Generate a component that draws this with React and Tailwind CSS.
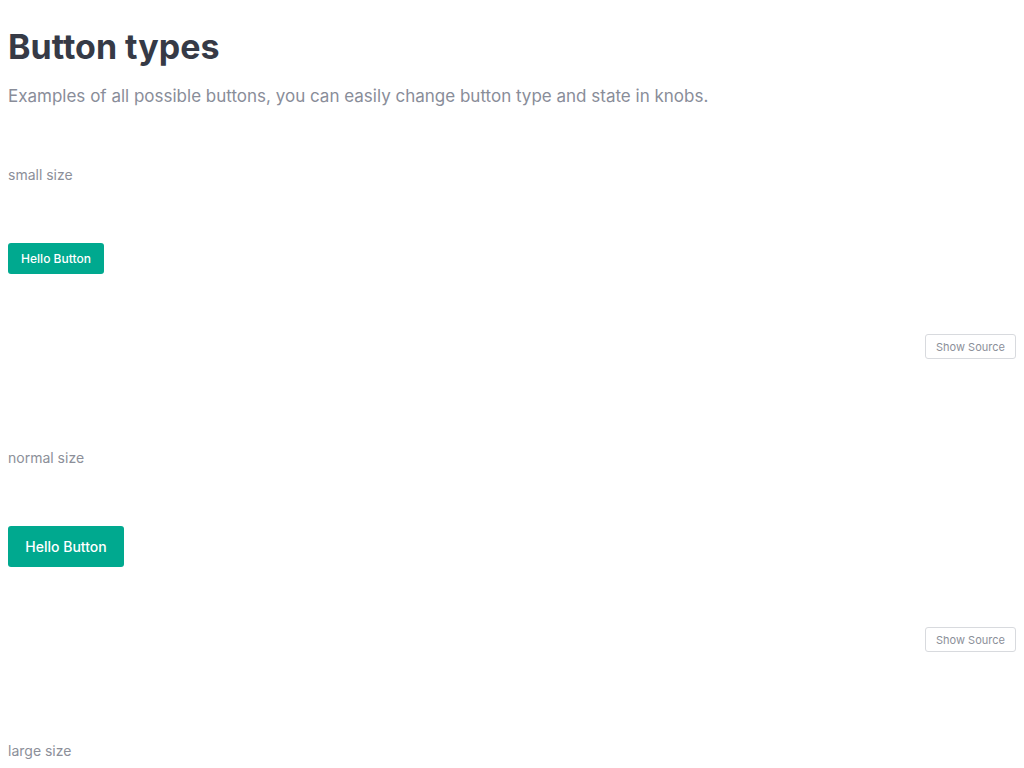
export default function App() {
  const Section = ({ label, small }) => (
    <div className="flex flex-col">
      <div className="text-sm leading-5 text-[#8c8f99]">{label}</div>
      <div className="mt-[58px] flex">
        {small ? (
          <button className="h-[31px] w-[96px] rounded-[3px] bg-[#00a98f] text-[12px] font-medium text-white">
            Hello Button
          </button>
        ) : (
          <button className="h-[41px] w-[116px] rounded-[3px] bg-[#00a98f] text-[14px] font-medium text-white">
            Hello Button
          </button>
        )}
      </div>
      <div className="mt-[60px] flex justify-end">
        <button className="h-[25px] w-[91px] rounded-[3px] border border-[#d8dade] bg-white pt-px text-[11px] text-[#8c8f99]">
          Show Source
        </button>
      </div>
    </div>
  );
  return (
    <div className="min-h-screen bg-white px-2 pt-[27px]" style={{ fontFamily: 'Inter, "Noto Sans", sans-serif' }}>
      <h1 className="text-[34px] font-bold leading-[40px] text-[#363a46]">Button types</h1>
      <p className="mt-[15px] text-[17px] leading-[28px] text-[#898d99]">
        Examples of all possible buttons, you can easily change button type and state in knobs.
      </p>
      <div className="mt-[55px] flex flex-col gap-[89px]">
        <Section label="small size" small />
        <Section label="normal size" />
        <div className="text-sm leading-5 text-[#8c8f99]">large size</div>
      </div>
    </div>
  );
}
